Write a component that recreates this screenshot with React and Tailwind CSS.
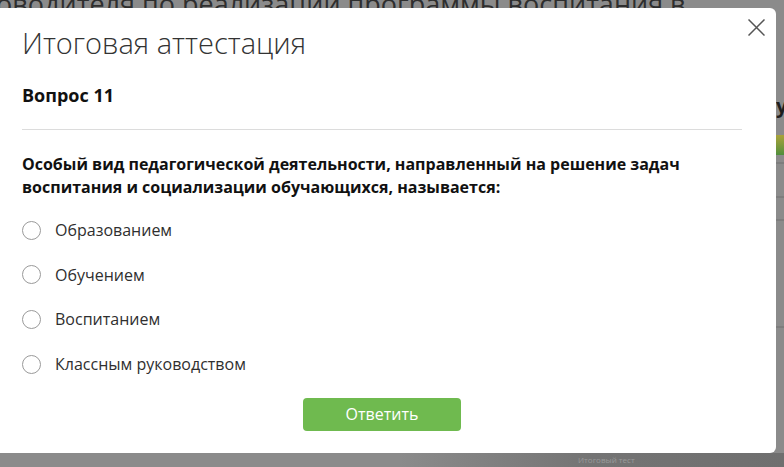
import React from "react";

const font = { fontFamily: '"Open Sans", "Noto Sans", sans-serif' };

function Radio({ label }) {
  return (
    <label className="flex h-[24px] items-center gap-[14px] cursor-pointer">
      <span className="block h-[19px] w-[19px] shrink-0 rounded-full border-[1.5px] border-[#9a9a9a] bg-white" />
      <span className="text-[16px] leading-[24px] text-[#2f2f2f]">{label}</span>
    </label>
  );
}

function BackgroundPage() {
  return (
    <div className="flex h-full w-full flex-col overflow-hidden">
      <div className="-ml-[4px] -mt-[10px] h-[28px] whitespace-nowrap text-[27px] leading-[28px] text-[#2e2e2e]">
        оводителя по реализации программы воспитания в
      </div>
      <div className="flex flex-1 justify-end">
        <div className="flex w-[8px] flex-col pt-[74px]">
          <div className="h-[28px] text-[20px] font-bold leading-[28px] text-[#1e1e1e]">у</div>
          <div className="mt-[15px] h-[20px] bg-gradient-to-b from-[#a9a23a] to-[#4f8f3c]" />
          <div className="mt-[7px] h-[2px] bg-[#7d7d7d]" />
          <div className="mt-[32px] h-[2px] bg-[#7d7d7d]" />
          <div className="mt-[21px] h-[2px] bg-[#7d7d7d]" />
          <div className="mt-[105px] h-[2px] bg-[#7d7d7d]" />
        </div>
      </div>
      <div className="flex h-[14px]">
        <div className="w-[400px]" />
        <div className="flex flex-1 items-center bg-gradient-to-r from-[#8b8b8b] via-[#747474] to-[#6f6f6f] pl-[178px]">
          <span className="text-[8px] leading-[10px] text-[#9a9a9a]">Итоговый тест</span>
        </div>
      </div>
    </div>
  );
}

export default function App() {
  const options = ["Образованием", "Обучением", "Воспитанием", "Классным руководством"];
  return (
    <div className="relative h-[467px] w-[784px] overflow-hidden bg-[#8b8b8b]" style={font}>
      <BackgroundPage />

      {/* modal lies over the dimmed page */}
      <div className="absolute left-[-12px] top-[8px] flex h-[445px] w-[788px] flex-col rounded-[6px] bg-white px-[34px] pt-[17px]">
        <button className="absolute right-[11px] top-[11px] h-[17px] w-[17px] text-[#555]" aria-label="close">
          <svg viewBox="0 0 17 17" className="h-[17px] w-[17px]" fill="none" stroke="currentColor" strokeWidth="1.5">
            <path d="M0.5 0.5 L16.5 16.5 M16.5 0.5 L0.5 16.5" />
          </svg>
        </button>

        <h1 className="text-[29px] font-light leading-[36px] text-[#333]">Итоговая аттестация</h1>
        <h2 className="mt-[21.5px] text-[18px] font-bold leading-[24px] text-[#111]">Вопрос 11</h2>
        <div className="mt-[22.5px] h-px w-full bg-[#dcdcdc]" />

        <p className="mt-[23px] text-[16px] font-bold leading-[23px] text-[#111]">
          Особый вид педагогической деятельности, направленный на решение задач
          <br />
          воспитания и социализации обучающихся, называется:
        </p>

        <div className="mt-[19px] flex flex-col gap-[20.7px]">
          {options.map((o) => (
            <Radio key={o} label={o} />
          ))}
        </div>

        <div className="mt-[21.7px] flex justify-center">
          <button className="h-[33px] w-[158px] rounded-[4px] bg-[#6fba4f] text-[16px] leading-[33px] text-white">
            Ответить
          </button>
        </div>
      </div>
    </div>
  );
}
